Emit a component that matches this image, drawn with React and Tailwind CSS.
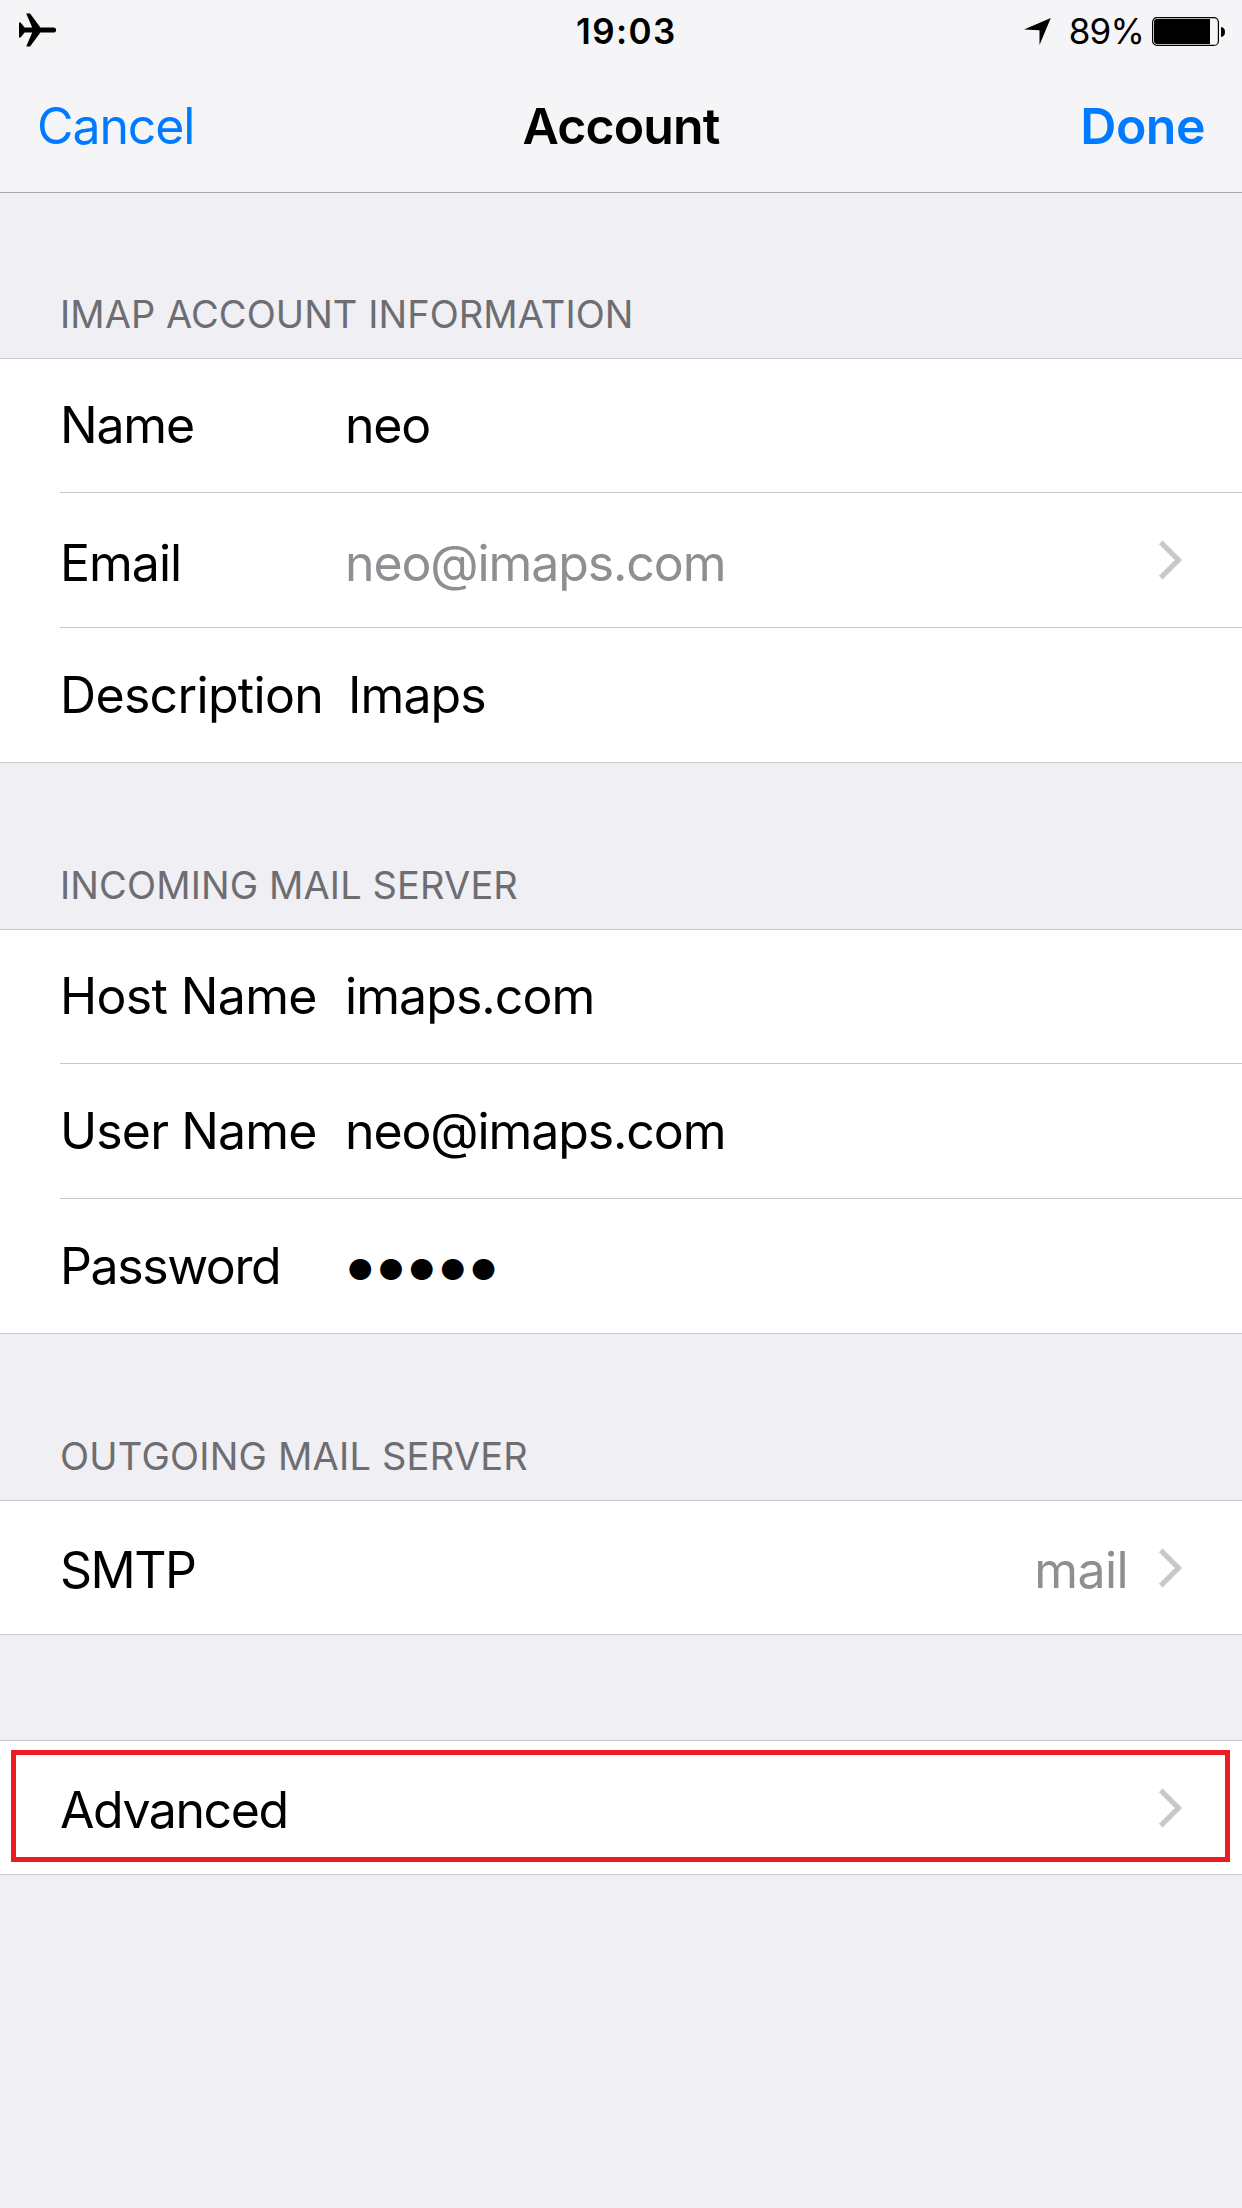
import React from "react";

function Airplane() {
  return (
    <svg className="w-[37px] h-[34px] -mt-[3px]" viewBox="19 12.5 37 34" fill="#000">
      <path d="M19 22h1.6l4 5h7.6L26.2 13h3.9L40.4 27h13.2a2.5 2.5 0 0 1 0 5H40.4L30.1 46h-3.9L32.2 32h-7.6l-4 5H19z" />
    </svg>
  );
}

function LocationArrow() {
  return (
    <svg className="w-[27px] h-[27px]" viewBox="0 0 27 27" fill="#000">
      <path d="M26.8 0L15.5 27V12.3L0 11.6z" />
    </svg>
  );
}

function Battery() {
  return (
    <svg className="w-[73px] h-[29px]" viewBox="0 0 73 29" fill="none">
      <rect x="0.6" y="0.6" width="65.8" height="27.8" rx="4.5" stroke="#000" strokeWidth="1.2" />
      <path d="M58 2H5a3 3 0 0 0-3 3v19a3 3 0 0 0 3 3h53z" fill="#000" />
      <path d="M69 10c2.600 .4 4 2.200 4 5s-1.400 4.600-4 5z" fill="#000" />
    </svg>
  );
}

function Chevron() {
  return (
    <svg className="w-[24px] h-[40px] shrink-0" viewBox="0 0 24 40" fill="none">
      <path d="M1.700 2.300L19.400 20L1.700 37.700" stroke="#c7c7cc" strokeWidth="5.2" />
    </svg>
  );
}

function SectionTitle({ children, className = "" }) {
  return (
    <h2 className={`flex items-end pl-[60px] pb-5 text-[38px] leading-[48px] font-normal text-[#6d6d72] ${className}`}>
      {children}
    </h2>
  );
}

function Group({ children }) {
  return <section className="border-y border-[#c8c7cc] bg-white pl-[60px]">{children}</section>;
}

function Row({ label, labelClass, children, className = "" }) {
  return (
    <div className={`flex items-center pr-[59px] ${className}`}>
      <span className={`w-[285px] shrink-0 ${labelClass}`}>{label}</span>
      {children}
    </div>
  );
}

const divider = "border-b border-[#c8c7cc]";

export default function App() {
  return (
    <main className="w-[1242px] h-[2208px] overflow-hidden bg-[#efeff4] font-['Inter','Liberation_Sans',sans-serif] text-[50px] leading-[60px] text-black whitespace-nowrap">
      <header className="h-[193px] border-b border-[#a7a7aa] bg-[#f5f5f7]">
        <div className="flex h-[60px] items-center pt-[2px] pl-[19px] pr-[17px] text-[35px] leading-[42px]">
          <div className="w-[557px]">
            <Airplane />
          </div>
          <span className="font-semibold tracking-[1.4px]">19:03</span>
          <div className="ml-auto flex items-center">
            <LocationArrow />
            <span className="ml-[18px] mr-[8px] tracking-[-0.8px]">89%</span>
            <Battery />
          </div>
        </div>
        <nav className="grid h-[132px] grid-cols-3 items-center pl-[37px] pr-[37px]">
          <span className="tracking-[-1.1px] text-[#007aff]">Cancel</span>
          <h1 className="text-center font-semibold tracking-[-0.85px]">Account</h1>
          <span className="text-right font-semibold tracking-[-0.5px] text-[#007aff]">Done</span>
        </nav>
      </header>

      <SectionTitle className="h-[165px] tracking-[0.07px]">IMAP ACCOUNT INFORMATION</SectionTitle>
      <Group>
        <Row label="Name" labelClass="tracking-[-1.2px]" className={`h-[134px] pb-[2px] ${divider}`}>
          <span className="tracking-[-1.2px]">neo</span>
        </Row>
        <Row label="Email" labelClass="pt-[5px] tracking-[-1px]" className={`h-[135px] ${divider}`}>
          <span className="flex-1 pt-[5px] tracking-[-1.1px] text-[#8e8e93]">neo@imaps.com</span>
          <Chevron />
        </Row>
        <Row label="Description" labelClass="tracking-[-0.67px]" className="h-[134px]">
          <span className="pl-[3px] tracking-[-0.9px]">Imaps</span>
        </Row>
      </Group>

      <SectionTitle className="h-[166px] tracking-[0.13px]">INCOMING MAIL SERVER</SectionTitle>
      <Group>
        <Row label="Host Name" labelClass="tracking-[-0.65px]" className={`h-[134px] pb-[2px] ${divider}`}>
          <span className="tracking-[-0.93px]">imaps.com</span>
        </Row>
        <Row label="User Name" labelClass="tracking-[-0.87px]" className={`h-[135px] ${divider}`}>
          <span className="tracking-[-1.1px]">neo@imaps.com</span>
        </Row>
        <Row label="Password" labelClass="tracking-[-1.4px]" className="h-[134px]">
          <span className="pl-[2px] pt-[8px] text-[29px] tracking-[4.3px]">●●●●●</span>
        </Row>
      </Group>

      <SectionTitle className="h-[166px] tracking-[0.22px]">OUTGOING MAIL SERVER</SectionTitle>
      <Group>
        <Row label="SMTP" labelClass="pt-[5px] tracking-[-1.5px]" className="h-[133px]">
          <span className="ml-auto mr-[31px] pt-[5px] tracking-[-0.6px] text-[#8e8e93]">mail</span>
          <Chevron />
        </Row>
      </Group>

      <div className="relative mt-[105px]">
        <Group>
          <Row label="Advanced" labelClass="pt-[5px] tracking-[-1.45px]" className="h-[133px] justify-between">
            <Chevron />
          </Row>
        </Group>
        <div className="pointer-events-none absolute left-[11px] right-[12px] top-[10px] h-[112px] border-[5px] border-[#ed1c24]" />
      </div>
    </main>
  );
}
